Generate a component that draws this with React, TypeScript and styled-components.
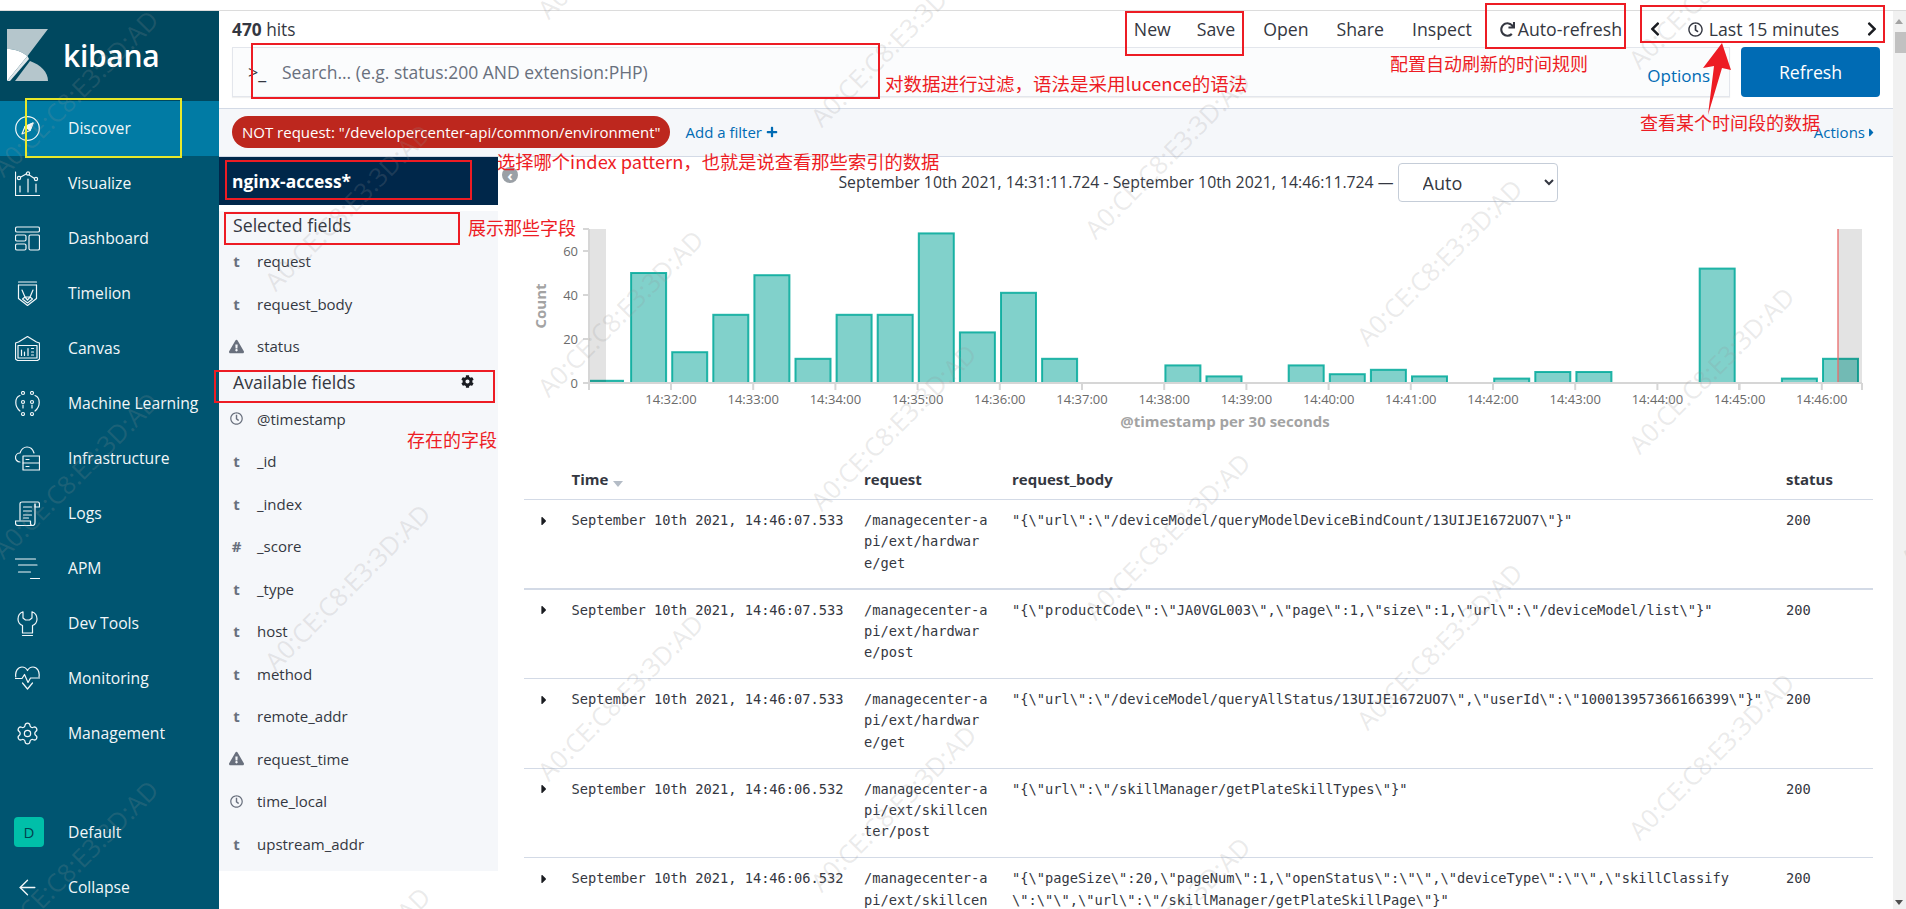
import React, { FC, ReactNode } from 'react';
import styled, { createGlobalStyle } from 'styled-components';
import { ArrowLeft, Settings } from 'lucide-react';
import {
  FaCaretRight,
  FaChevronLeft,
  FaChevronRight,
  FaCog,
  FaExclamationTriangle,
  FaPlus,
  FaRedo,
  FaRegClock,
} from 'react-icons/fa';

const GlobalStyle = createGlobalStyle`
  html, body {
    margin: 0;
    padding: 0;
    background: #fff;
    overflow: hidden;
  }
  body {
    font-family: "Open Sans", "Noto Sans CJK SC", sans-serif;
    color: #343741;
  }
  * {
    box-sizing: border-box;
  }
`;

const Line = styled.svg`
  display: block;
  width: 25px;
  height: 25px;
  fill: none;
  stroke: #f2f7f9;
  stroke-width: 1.2;
  stroke-linecap: round;
  stroke-linejoin: round;
`;

const CompassIcon = () => (
  <Line viewBox="0 0 25 25">
    <circle cx="12.5" cy="12.5" r="11.8" />
    <path d="M18 7l-8 3.5-3 7.5 8-3.5z" />
    <path d="M18 7l-8 3.5 5 4z" fill="#f2f7f9" />
  </Line>
);
const VisualizeIcon = () => (
  <Line viewBox="0 0 25 25">
    <path d="M.5 1v23.5h24" />
    <path d="M4 7l8-4.5 9 6" />
    <circle cx="4" cy="7" r="1.6" fill="#005571" />
    <circle cx="13" cy="2.5" r="1.6" fill="#005571" />
    <circle cx="21" cy="8" r="1.6" fill="#005571" />
    <path d="M5 15v6M13 8v13M21 13v8" />
  </Line>
);
const DashboardIcon = () => (
  <Line viewBox="0 0 25 25">
    <rect x=".5" y="1" width="24" height="5" rx="1.5" />
    <rect x=".5" y="9" width="10.5" height="6" rx="1.5" />
    <rect x=".5" y="18" width="10.5" height="6" rx="1.5" />
    <rect x="14" y="9" width="10.5" height="15" rx="1.5" />
  </Line>
);
const TimelionIcon = () => (
  <Line viewBox="0 0 25 25">
    <path d="M3.5 1h18M3.5 4h18" />
    <path d="M3.5 4v13.500l9 7 9-7V4" />
    <path d="M7 9l3 7-2.500 2 5 4 5-4-2.500-2 3-7" />
    <path d="M10 16h5l-2.500 3z" />
  </Line>
);
const CanvasIcon = () => (
  <Line viewBox="0 0 25 25">
    <path d="M.5 7l3-1 9-5.500 9 5.500 3 1v16l-2 1.500h-20l-2-1.500z" />
    <path d="M3 9.500h19v12.500h-19z" />
    <path d="M6.500 14v5.500M9.500 16v3.500M13 12.500v7M16.500 12.500h2M16.500 16h2M16.500 19h2" />
  </Line>
);
const MachineIcon = () => (
  <Line viewBox="0 0 25 25">
    <circle cx="8" cy="2" r="1.500" />
    <circle cx="17" cy="2" r="1.500" />
    <circle cx="8" cy="11" r="1.500" />
    <circle cx="17" cy="11" r="1.500" />
    <circle cx="8" cy="23" r="1.500" />
    <circle cx="17" cy="23" r="1.500" />
    <path d="M5 4.500C2 5.500.8 8 .8 11.500.8 15 2.500 18 5 20" />
    <path d="M20 4.500c3 1 4.200 3.500 4.200 7 0 3.500-1.700 6.500-4.200 8.500" />
    <path d="M8 14v3M17 14v3" />
  </Line>
);
const InfraIcon = () => (
  <Line viewBox="0 0 25 25">
    <path d="M5 16C2 16 .5 13.500.5 11.500.5 9 2.500 7 5 7c1-3.500 4-6 7-6 3.500 0 6 2.500 7 6" />
    <rect x="8" y="10" width="16.500" height="14" />
    <path d="M8 17h16.500M11 13.500h3M11 20.500h3" />
  </Line>
);
const LogsIcon = () => (
  <Line viewBox="0 0 25 25">
    <path d="M5 19V3c0-1.200 1-2 2-2h16c1 0 1.500 1 1.500 2.500V6H20V3" />
    <path d="M.5 20h15v2.500c0 1.300 1 2 2 2H3c-1.500 0-2.500-1-2.500-2.500z" />
    <path d="M20 3v18c0 2-1 3.500-2.500 3.500" />
    <path d="M8.500 6h8M8.500 10h8M8.500 14h8M8.500 17h5" />
  </Line>
);
const ApmIcon = () => (
  <Line viewBox="0 0 25 25">
    <path d="M.5 3h20M3.500 9h18.500M3.500 16h12M15.500 22.500h9" />
  </Line>
);
const DevToolsIcon = () => (
  <Line viewBox="0 0 25 25">
    <path d="M8 .8C5 2 3 4.500 3 8c0 3 2 5.500 4.500 6.500V22h10v-7.500C20 13.500 22 11 22 8c0-3.500-2-6-5-7.200V7l-2.500 2h-4L8 7z" />
    <path d="M7.500 24.500h10" />
  </Line>
);
const MonitoringIcon = () => (
  <Line viewBox="0 0 25 25">
    <path d="M.8 11C-.2 5.500 3 1 7 1c2.500 0 4.500 1.500 5.500 3.500C13.500 2.500 15.500 1 18 1c4 0 7 4.500 6 10" />
    <path d="M.5 12.500h6.500l2.500-4 3.500 8 2.500-4.500h9" />
    <path d="M7.500 17l5 6 5-6" />
  </Line>
);

const KibanaLogo = () => (
  <LogoMark viewBox="0 0 41 52">
    <path d="M0 0h41L20.500 27C14.500 22.500 7.500 20 0 20z" fill="#b5c6cc" />
    <path d="M0 20c7.500 0 14.500 2.500 20.500 7L0 52z" fill="#fff" />
    <path d="M3 52l19-22-1.500-3L0 52z" fill="#dfe6e9" />
    <path d="M8 52l15-20c11 4 18 11 18 20z" fill="#b5c6cc" />
  </LogoMark>
);

const navItems: { label: string; icon: ReactNode }[] = [
  { label: 'Discover', icon: <CompassIcon /> },
  { label: 'Visualize', icon: <VisualizeIcon /> },
  { label: 'Dashboard', icon: <DashboardIcon /> },
  { label: 'Timelion', icon: <TimelionIcon /> },
  { label: 'Canvas', icon: <CanvasIcon /> },
  { label: 'Machine Learning', icon: <MachineIcon /> },
  { label: 'Infrastructure', icon: <InfraIcon /> },
  { label: 'Logs', icon: <LogsIcon /> },
  { label: 'APM', icon: <ApmIcon /> },
  { label: 'Dev Tools', icon: <DevToolsIcon /> },
  { label: 'Monitoring', icon: <MonitoringIcon /> },
  { label: 'Management', icon: <Settings size={25} strokeWidth={1.2} color="#f2f7f9" /> },
];

type FieldKind = 't' | 'warn' | 'clock' | '#';

const selectedFields: [FieldKind, string][] = [
  ['t', 'request'],
  ['t', 'request_body'],
  ['warn', 'status'],
];

const availableFields: [FieldKind, string][] = [
  ['clock', '@timestamp'],
  ['t', '_id'],
  ['t', '_index'],
  ['#', '_score'],
  ['t', '_type'],
  ['t', 'host'],
  ['t', 'method'],
  ['t', 'remote_addr'],
  ['warn', 'request_time'],
  ['clock', 'time_local'],
  ['t', 'upstream_addr'],
];

const FieldIcon: FC<{ kind: FieldKind }> = ({ kind }) => {
  if (kind === 'warn') return <FaExclamationTriangle size={15} />;
  if (kind === 'clock') return <FaRegClock size={13} />;
  return <span>{kind}</span>;
};

const counts = [1, 50, 14, 31, 49, 11, 31, 31, 68, 23, 41, 11, 0, 0, 8, 3, 0, 8, 4, 6, 3, 0, 2, 5, 5, 0, 0, 52, 0, 2, 11];
const minutes = Array.from({ length: 15 }, (_, i) => i + 32);

const Histogram = () => (
  <ChartSvg viewBox="498 210 1395 249">
    {counts.map((count, i) =>
      count > 0 ? (
        <Bar
          key={i}
          x={590 + i * 41.1 - (i === 0 ? 1 : 0)}
          y={383 - count * 2.2}
          width={i === 0 ? 34 : 35}
          height={count * 2.2}
        />
      ) : null,
    )}
    <Shade x={590} y={229} width={16} height={154} />
    <Shade x={1838} y={229} width={24} height={154} />
    <line x1={1838} y1={229} x2={1838} y2={383} stroke="#ea6a6a" strokeOpacity={0.65} strokeWidth={2} />
    <AxisLine d="M589 229v161M583 229h6M583 251h6M583 295h6M583 339h6M583 383h1279" />
    {minutes.map((m, i) => (
      <g key={m}>
        <AxisLine d={`M${671 + i * 82.2} 383v7`} />
        <TickLabel x={671 + i * 82.2} y={404} textAnchor="middle">
          14:{m}:00
        </TickLabel>
      </g>
    ))}
    <AxisLine d="M1862 383v7M1739 383v7" />
    {[60, 40, 20, 0].map((v, i) => (
      <TickLabel key={v} x={578} y={256 + i * 44} textAnchor="end">
        {v}
      </TickLabel>
    ))}
    <AxisTitle x={0} y={0} textAnchor="middle" transform="translate(546 306) rotate(-90)">
      Count
    </AxisTitle>
    <AxisTitle x={1225} y={427} textAnchor="middle">
      @timestamp per 30 seconds
    </AxisTitle>
  </ChartSvg>
);

const rows = [
  {
    time: 'September 10th 2021, 14:46:07.533',
    request: '/managecenter-api/ext/hardware/get',
    body: '"{\\"url\\":\\"/deviceModel/queryModelDeviceBindCount/13UIJE1672UO7\\"}"',
    heavy: true,
  },
  {
    time: 'September 10th 2021, 14:46:07.533',
    request: '/managecenter-api/ext/hardware/post',
    body: '"{\\"productCode\\":\\"JA0VGL003\\",\\"page\\":1,\\"size\\":1,\\"url\\":\\"/deviceModel/list\\"}"',
  },
  {
    time: 'September 10th 2021, 14:46:07.533',
    request: '/managecenter-api/ext/hardware/get',
    body: '"{\\"url\\":\\"/deviceModel/queryAllStatus/13UIJE1672UO7\\",\\"userId\\":\\"100013957366166399\\"}"',
  },
  {
    time: 'September 10th 2021, 14:46:06.532',
    request: '/managecenter-api/ext/skillcenter/post',
    body: '"{\\"url\\":\\"/skillManager/getPlateSkillTypes\\"}"',
  },
  {
    time: 'September 10th 2021, 14:46:06.532',
    request: '/managecenter-api/ext/skillcenter/post',
    body: '"{\\"pageSize\\":20,\\"pageNum\\":1,\\"openStatus\\":\\"\\",\\"deviceType\\":\\"\\",\\"skillClassify\n\\":\\"\\",\\"url\\":\\"/skillManager/getPlateSkillPage\\"}"',
  },
];

const watermarks: [number, number][] = [
  [75, 93], [75, 475], [75, 863],
  [347, 207], [347, 587], [347, 970],
  [620, -65], [620, 313], [620, 697],
  [893, 43], [893, 427], [893, 808],
  [1167, 155], [1167, 536], [1167, 920],
  [1439, 262], [1439, 646],
  [1711, -15], [1711, 370], [1711, 756],
  [1983, 484],
];

const boxes = [
  { x: 251, y: 43, w: 629, h: 56, color: '#ed1c24' },
  { x: 1125, y: 11, w: 119, h: 45, color: '#ed1c24' },
  { x: 1485, y: 3, w: 141, h: 46, color: '#ed1c24' },
  { x: 1640, y: 5, w: 245, h: 38, color: '#ed1c24' },
  { x: 25, y: 98, w: 157, h: 60, color: '#e8e82a' },
  { x: 225, y: 160, w: 247, h: 40, color: '#ed1c24' },
  { x: 224, y: 212, w: 236, h: 33, color: '#ed1c24' },
  { x: 214, y: 370, w: 281, h: 33, color: '#ed1c24' },
];

const notes = [
  { x: 885, y: 71, size: 18.5, text: '对数据进行过滤\uFF0C语法是采用lucence的语法' },
  { x: 1390, y: 51, size: 18, text: '配置自动刷新的时间规则' },
  { x: 1640, y: 110, size: 18, text: '查看某个时间段的数据' },
  { x: 497, y: 149, size: 18.3, text: '选择哪个index pattern\uFF0C也就是说查看那些索引的数据' },
  { x: 468, y: 215, size: 18, text: '展示那些字段' },
  { x: 407, y: 427, size: 18, text: '存在的字段' },
];

export default function App() {
  return (
    <Page>
      <GlobalStyle />
      <TopStrip />
      <Shell>
        <Sidebar>
          <Brand>
            <KibanaLogo />
            <BrandName>kibana</BrandName>
          </Brand>
          {navItems.map((item, i) => (
            <NavItem key={item.label} $active={i === 0}>
              <NavIcon>{item.icon}</NavIcon>
              {item.label}
            </NavItem>
          ))}
          <SidebarFooter>
            <NavItem>
              <NavIcon>
                <SpaceBadge>D</SpaceBadge>
              </NavIcon>
              Default
            </NavItem>
            <NavItem>
              <NavIcon>
                <ArrowLeft size={25} strokeWidth={1.3} color="#f2f7f9" />
              </NavIcon>
              Collapse
            </NavItem>
          </SidebarFooter>
        </Sidebar>
        <Main>
          <TopNav>
            <Hits>
              <strong>470</strong> hits
            </Hits>
            <Menu>
              <MenuItem>New</MenuItem>
              <MenuItem>Save</MenuItem>
              <MenuItem>Open</MenuItem>
              <MenuItem>Share</MenuItem>
              <MenuItem>Inspect</MenuItem>
              <MenuItem>
                <FaRedo size={15} />
                Auto-refresh
              </MenuItem>
              <TimePicker>
                <FaChevronLeft size={16} />
                <TimeLabel>
                  <FaRegClock size={15} />
                  Last 15 minutes
                </TimeLabel>
                <FaChevronRight size={16} />
              </TimePicker>
            </Menu>
          </TopNav>
          <SearchRow>
            <SearchBox>
              <Prompt>&gt;_</Prompt>
              <SearchInput placeholder="Search... (e.g. status:200 AND extension:PHP)" />
              <OptionsLink>Options</OptionsLink>
            </SearchBox>
            <RefreshButton>Refresh</RefreshButton>
          </SearchRow>
          <FilterBar>
            <FilterPill>NOT request: "/developercenter-api/common/environment"</FilterPill>
            <AddFilter>
              Add a filter <FaPlus size={12} />
            </AddFilter>
            <ActionsLink>
              Actions
              <FaCaretRight size={13} />
            </ActionsLink>
          </FilterBar>
          <Body>
            <FieldPanel>
              <IndexBar>nginx-access*</IndexBar>
              <FieldList>
                <FieldHeader $top={6} $bottom={1}>
                  Selected fields
                </FieldHeader>
                {selectedFields.map(([kind, name]) => (
                  <FieldRow key={name}>
                    <FieldType>
                      <FieldIcon kind={kind} />
                    </FieldType>
                    {name}
                  </FieldRow>
                ))}
                <FieldHeader $top={0} $bottom={2}>
                  Available fields
                  <FaCog size={13} color="#1a1c21" />
                </FieldHeader>
                {availableFields.map(([kind, name]) => (
                  <FieldRow key={name}>
                    <FieldType>
                      <FieldIcon kind={kind} />
                    </FieldType>
                    {name}
                  </FieldRow>
                ))}
              </FieldList>
            </FieldPanel>
            <Results>
              <CollapseDot>‹</CollapseDot>
              <RangeRow>
                <span>September 10th 2021, 14:31:11.724 - September 10th 2021, 14:46:11.724 —</span>
                <IntervalSelect defaultValue="Auto">
                  <option>Auto</option>
                </IntervalSelect>
              </RangeRow>
              <Histogram />
              <DocTable>
                <HeadRow>
                  <span />
                  <span>
                    Time <SortCaret />
                  </span>
                  <span>request</span>
                  <span>request_body</span>
                  <span>status</span>
                </HeadRow>
                {rows.map((row, i) => (
                  <DocRow key={i} $heavy={row.heavy}>
                    <RowToggle>
                      <FaCaretRight size={14} />
                    </RowToggle>
                    <span>{row.time}</span>
                    <RequestCell>{row.request}</RequestCell>
                    <BodyCell>{row.body}</BodyCell>
                    <span>200</span>
                  </DocRow>
                ))}
              </DocTable>
            </Results>
          </Body>
        </Main>
        <ScrollTrack>
          <ScrollUp />
          <ScrollThumb />
          <ScrollDown />
        </ScrollTrack>
      </Shell>

      {watermarks.map(([x, y]) => (
        <Watermark key={`${x}-${y}`} $x={x} $y={y}>
          A0:CE:C8:E3:3D:AD
        </Watermark>
      ))}
      {boxes.map((b) => (
        <MarkBox key={`${b.x}-${b.y}`} $x={b.x} $y={b.y} $w={b.w} $h={b.h} $color={b.color} />
      ))}
      {notes.map((n) => (
        <Note key={n.text} $x={n.x} $y={n.y} $size={n.size}>
          {n.text}
        </Note>
      ))}
      <ArrowMark viewBox="0 0 32 72">
        <path d="M21 0L2 25l11-2-6 49L21 25l9 2z" fill="#ed1c24" />
      </ArrowMark>
    </Page>
  );
}

const Page = styled.div`
  position: relative;
  width: 1906px;
  height: 909px;
  overflow: hidden;
  background: #fff;
  display: flex;
  flex-direction: column;
`;
const TopStrip = styled.div`
  height: 11px;
  flex: none;
  border-bottom: 1px solid #dcdcdc;
`;
const Shell = styled.div`
  flex: 1;
  min-height: 0;
  display: flex;
`;
const Sidebar = styled.nav`
  width: 219px;
  flex: none;
  background: #005571;
  color: #f2f7f9;
  display: flex;
  flex-direction: column;
  overflow: hidden;
`;
const Brand = styled.div`
  height: 89.5px;
  flex: none;
  background: #00485f;
  display: flex;
  align-items: center;
  gap: 15px;
  padding: 0 0 1px 7px;
`;
const LogoMark = styled.svg`
  width: 41px;
  height: 52px;
`;
const BrandName = styled.span`
  color: #fff;
  font-size: 30px;
  font-weight: 600;
  letter-spacing: -0.3px;
`;
const NavItem = styled.div<{ $active?: boolean }>`
  height: 55px;
  flex: none;
  display: flex;
  align-items: center;
  font-size: 15.7px;
  padding-left: 15px;
  background: ${(p) => (p.$active ? '#017ba4' : 'transparent')};
`;
const NavIcon = styled.span`
  width: 53px;
  flex: none;
  display: flex;
  align-items: center;
`;
const SidebarFooter = styled.div`
  margin-top: 44px;
`;
const SpaceBadge = styled.span`
  width: 30px;
  height: 30px;
  margin-left: -1px;
  border-radius: 4px;
  background: #00bfa9;
  color: #00424f;
  display: flex;
  align-items: center;
  justify-content: center;
  font-size: 15px;
`;
const Main = styled.main`
  flex: 1;
  min-width: 0;
  display: flex;
  flex-direction: column;
`;
const TopNav = styled.div`
  height: 36px;
  flex: none;
  display: flex;
  justify-content: space-between;
  align-items: center;
  padding: 0 0 0 13px;
`;
const Hits = styled.div`
  font-size: 17.3px;
  color: #343741;
  strong {
    font-weight: 700;
  }
`;
const Menu = styled.div`
  display: flex;
  align-items: center;
  gap: 28px;
  font-size: 17.7px;
  color: #343741;
`;
const MenuItem = styled.span`
  display: flex;
  align-items: center;
  gap: 3px;
  &:first-child {
    margin-right: -2px;
  }
`;
const TimePicker = styled.div`
  width: 233px;
  margin: 0 13px 0 -3px;
  display: flex;
  align-items: center;
  justify-content: space-between;
  color: #1a1c21;
`;
const TimeLabel = styled.span`
  display: flex;
  align-items: center;
  gap: 6px;
  color: #343741;
`;
const SearchRow = styled.div`
  height: 50px;
  flex: none;
  display: flex;
  gap: 11px;
  padding: 0 13px;
`;
const SearchBox = styled.div`
  flex: 1;
  display: flex;
  align-items: center;
  background: #fbfcfd;
  border: 1px solid #e3e6ec;
  box-shadow: 0 1px 1px rgba(0, 0, 0, 0.06);
`;
const Prompt = styled.span`
  width: 49px;
  flex: none;
  padding-left: 15px;
  font-size: 18px;
  color: #343741;
`;
const SearchInput = styled.input`
  flex: 1;
  min-width: 0;
  border: 0;
  outline: 0;
  padding: 0;
  background: transparent;
  font: 17.5px "Open Sans", sans-serif;
  &::placeholder {
    color: #69707d;
    opacity: 1;
  }
`;
const OptionsLink = styled.span`
  padding: 6px 19px 0 0;
  font-size: 17px;
  color: #006bb4;
`;
const RefreshButton = styled.button`
  width: 139px;
  flex: none;
  border: 0;
  border-radius: 4px;
  background: #006bb4;
  color: #fff;
  font: 500 17.7px "Open Sans", sans-serif;
`;
const FilterBar = styled.div`
  height: 49px;
  flex: none;
  margin-top: 11px;
  display: flex;
  align-items: center;
  padding: 0 15px 1px 13px;
  background: #f5f7fa;
  border-top: 1px solid #d3dae6;
  border-bottom: 1px solid #d3dae6;
`;
const FilterPill = styled.span`
  height: 32px;
  display: flex;
  align-items: center;
  padding: 0 10px;
  border-radius: 16px;
  background: #bd271e;
  color: #fff;
  font-size: 15px;
  white-space: nowrap;
`;
const AddFilter = styled.span`
  margin-left: 15px;
  display: flex;
  align-items: center;
  gap: 4px;
  font-size: 15px;
  color: #006bb4;
`;
const ActionsLink = styled.span`
  margin-left: auto;
  display: flex;
  align-items: center;
  font-size: 15px;
  color: #006bb4;
`;
const Body = styled.div`
  flex: 1;
  min-height: 0;
  display: flex;
`;
const FieldPanel = styled.aside`
  width: 279px;
  flex: none;
`;
const IndexBar = styled.div`
  height: 48px;
  display: flex;
  align-items: center;
  padding-left: 13px;
  background: #00274a;
  color: #fff;
  font-size: 17.4px;
  font-weight: 700;
`;
const FieldList = styled.div`
  height: 660px;
  background: #f5f7fa;
`;
const FieldHeader = styled.div<{ $top: number; $bottom: number }>`
  height: 28px;
  margin: ${(p) => p.$top}px 0 ${(p) => p.$bottom}px;
  padding: 0 24px 0 14px;
  display: flex;
  align-items: center;
  justify-content: space-between;
  font-size: 17.7px;
  color: #343741;
`;
const FieldRow = styled.div`
  height: 42.5px;
  display: flex;
  align-items: center;
  font-size: 15px;
  color: #343741;
`;
const FieldType = styled.span`
  width: 38px;
  flex: none;
  padding-right: 3px;
  display: flex;
  justify-content: center;
  color: #69707d;
  font-size: 15px;
  font-weight: 700;
`;
const Results = styled.section`
  position: relative;
  flex: 1;
  min-width: 0;
`;
const CollapseDot = styled.span`
  position: absolute;
  left: 4px;
  top: 10px;
  width: 16px;
  height: 16px;
  border-radius: 50%;
  background: #9aa0a6;
  color: #fff;
  display: flex;
  align-items: center;
  justify-content: center;
  font-size: 15px;
  font-weight: 700;
  line-height: 1;
`;
const RangeRow = styled.div`
  height: 45px;
  padding: 6px 0 0 5px;
  display: flex;
  justify-content: center;
  gap: 4px;
  font-size: 15.8px;
  color: #343741;
  span {
    line-height: 39px;
  }
`;
const IntervalSelect = styled.select`
  width: 160px;
  height: 39px;
  padding: 0 20px;
  background: #fff;
  border: 1px solid #c5cdd8;
  border-radius: 4px;
  font: 18px "Open Sans", sans-serif;
  color: #343741;
`;
const ChartSvg = styled.svg`
  display: block;
  width: 1395px;
  height: 249px;
  margin-top: 8px;
`;
const Bar = styled.rect`
  fill: #81d1cb;
  stroke: #00a99a;
  stroke-width: 2;
  stroke-opacity: 0.85;
`;
const Shade = styled.rect`
  fill: #000;
  fill-opacity: 0.11;
`;
const AxisLine = styled.path`
  fill: none;
  stroke: #d6d6d6;
  stroke-width: 2;
`;
const TickLabel = styled.text`
  font-family: "Open Sans", sans-serif;
  font-size: 13px;
  fill: #6b6b6b;
`;
const AxisTitle = styled.text`
  font-family: "Open Sans", sans-serif;
  font-size: 15px;
  font-weight: 700;
  fill: #a3a3a3;
`;
const DocTable = styled.div`
  margin: 0 20px 0 26px;
`;
const gridColumns = '47.6px 292.4px 148px 774px 87px';
const HeadRow = styled.div`
  height: 41px;
  display: grid;
  grid-template-columns: ${gridColumns};
  align-items: center;
  border-bottom: 1px solid #d3dae6;
  font-size: 15px;
  font-weight: 700;
  color: #343741;
`;
const SortCaret = styled.i`
  display: inline-block;
  width: 0;
  height: 0;
  margin-left: 1px;
  vertical-align: -2px;
  border-left: 5px solid transparent;
  border-right: 5px solid transparent;
  border-top: 6px solid #b4bcc6;
`;
const DocRow = styled.div<{ $heavy?: boolean }>`
  height: 89.6px;
  padding-top: 10px;
  display: grid;
  grid-template-columns: ${gridColumns};
  align-items: start;
  border-bottom: ${(p) => (p.$heavy ? '2px' : '1px')} solid #d3dae6;
  font-family: "DejaVu Sans Mono", "Liberation Mono", monospace;
  font-size: 13.7px;
  line-height: 21.3px;
  color: #343741;
`;
const RowToggle = styled.span`
  display: flex;
  align-items: center;
  height: 21px;
  padding-left: 13px;
  color: #1a1c21;
`;
const RequestCell = styled.span`
  padding-right: 18px;
  word-break: break-all;
`;
const BodyCell = styled.span`
  white-space: pre-wrap;
  word-break: break-all;
  padding-right: 15px;
`;
const ScrollTrack = styled.div`
  width: 13px;
  flex: none;
  position: relative;
  background: #f1f1f1;
  display: flex;
  flex-direction: column;
  align-items: flex-end;
`;
const ScrollUp = styled.i`
  margin: 8px 3px 0 0;
  width: 0;
  height: 0;
  border-left: 4px solid transparent;
  border-right: 4px solid transparent;
  border-bottom: 5px solid #a3a3a3;
`;
const ScrollThumb = styled.i`
  margin-top: 8px;
  width: 11px;
  height: 21px;
  background: #c1c1c1;
`;
const ScrollDown = styled.i`
  margin: auto 3px 4px 0;
  width: 0;
  height: 0;
  border-left: 4px solid transparent;
  border-right: 4px solid transparent;
  border-top: 5px solid #505050;
`;
const Watermark = styled.span<{ $x: number; $y: number }>`
  position: absolute;
  left: ${(p) => p.$x}px;
  top: ${(p) => p.$y}px;
  transform: translate(-50%, -50%) rotate(-45deg);
  font-size: 25.5px;
  white-space: nowrap;
  color: rgba(150, 150, 150, 0.2);
  pointer-events: none;
`;
const MarkBox = styled.div<{ $x: number; $y: number; $w: number; $h: number; $color: string }>`
  position: absolute;
  left: ${(p) => p.$x}px;
  top: ${(p) => p.$y}px;
  width: ${(p) => p.$w}px;
  height: ${(p) => p.$h}px;
  border: 2px solid ${(p) => p.$color};
  pointer-events: none;
`;
const Note = styled.span<{ $x: number; $y: number; $size: number }>`
  position: absolute;
  left: ${(p) => p.$x}px;
  top: ${(p) => p.$y}px;
  font-family: "Noto Sans CJK SC", "Open Sans", sans-serif;
  font-size: ${(p) => p.$size}px;
  line-height: 24px;
  white-space: nowrap;
  color: #ed1c24;
`;
const ArrowMark = styled.svg`
  position: absolute;
  left: 1701px;
  top: 43px;
  width: 32px;
  height: 72px;
`;
